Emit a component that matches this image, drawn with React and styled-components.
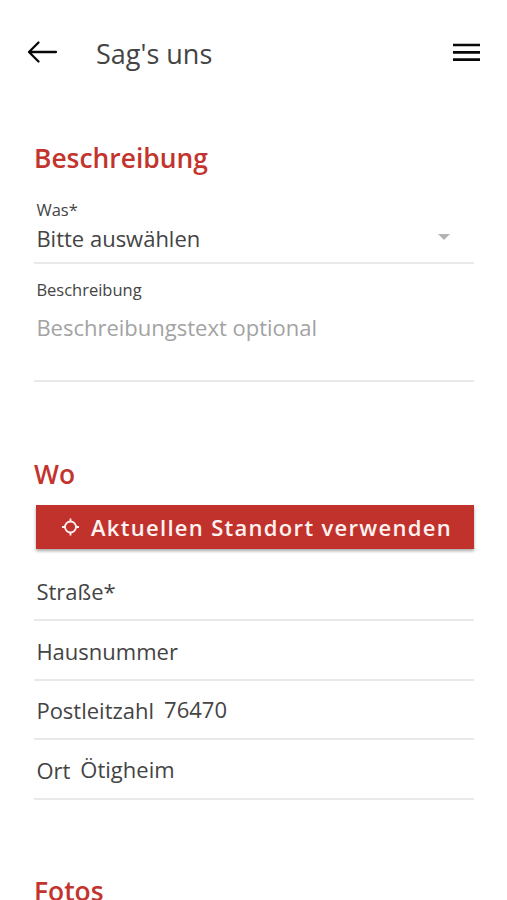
import React from "react";
import styled, { createGlobalStyle } from "styled-components";

const GlobalStyle = createGlobalStyle`
  * { box-sizing: border-box; }
  body { margin: 0; background: #fff; font-family: "Open Sans", sans-serif; color: #444; }
`;
const Screen = styled.main`
  height: 900px; overflow: hidden; background: #fff;
`;
const Toolbar = styled.header`
  display: flex; align-items: center; height: 104px; padding: 0 27px;
`;
const Title = styled.h1`
  flex: 1; margin: 3px 0 0 38px; font-size: 27px; line-height: 36px; font-weight: 400;
`;
const IconButton = styled.button`
  display: flex; padding: 0; border: 0; background: none; color: #080808;
`;
const Section = styled.section`
  padding: 0 33px 0 34px; margin-top: ${(p) => p.$gap}px;
`;
const Heading = styled.h2`
  margin: 0; height: 36px; line-height: 36px; font-size: 26.4px; font-weight: 600; color: #c2342d;
`;
const Field = styled.div`
  height: ${(p) => p.$height}px; padding: ${(p) => p.$top}px 0 0 2.4px; border-bottom: 2px solid #e9e9e9;
`;
const SmallLabel = styled.label`
  display: block; font-size: 16.5px; line-height: 22px;
`;
const Value = styled.div`
  display: flex; align-items: center; justify-content: space-between;
  margin-top: ${(p) => p.$gap}px; padding-right: 24px;
  font-size: 22px; line-height: 30px; color: ${(p) => (p.$muted ? "#a3a3a3" : "#444")};
`;
const DropdownArrow = styled.svg`
  margin-bottom: 2px;
`;
const Rows = styled.div`
  padding-top: 12px;
`;
const Row = styled.div`
  display: flex; gap: 10px; height: 59.7px; padding: 14.6px 0 0 2.4px;
  border-bottom: 2px solid #e9e9e9; font-size: 22px; line-height: 30px;
`;
const RowValue = styled.span`
  margin-top: -1px;
`;
const LocationButton = styled.button`
  display: flex; align-items: center; gap: 12px; width: 438px; height: 44px;
  margin: 13.4px 0 0 2px; padding: 0 0 0 26px; border: 0; background: #c1322c; color: #fff3f2;
  font: 600 22px/30px "Open Sans", sans-serif; letter-spacing: 1.3px; white-space: nowrap;
  box-shadow: 0 2px 3px rgba(0, 0, 0, 0.35);
`;

export default function App() {
  return (
    <Screen>
      <GlobalStyle />
      <Toolbar>
        <IconButton aria-label="Zurück">
          <svg width="31" height="24" viewBox="0 0 31 24" fill="none" stroke="currentColor" strokeWidth="2.3" strokeLinecap="round" strokeLinejoin="round">
            <path d="M29 12H2M11.5 2.5L2 12L11.5 21.5" />
          </svg>
        </IconButton>
        <Title>Sag's uns</Title>
        <IconButton aria-label="Menü">
          <svg width="27" height="20" viewBox="0 0 27 20" stroke="currentColor" strokeWidth="2.6">
            <path d="M0 3H27M0 10.4H27M0 17.6H27" />
          </svg>
        </IconButton>
      </Toolbar>
      <Section $gap={36}>
        <Heading>Beschreibung</Heading>
        <Field $height={88} $top={23}>
          <SmallLabel>Was*</SmallLabel>
          <Value $gap={2}>
            Bitte auswählen
            <DropdownArrow width="12" height="6" viewBox="0 0 12 6" fill="#b3b3b3"><path d="M0 0H12L6 6Z" /></DropdownArrow>
          </Value>
        </Field>
        <Field $height={118} $top={15}>
          <SmallLabel>Beschreibung</SmallLabel>
          <Value $muted $gap={11}>Beschreibungstext optional</Value>
        </Field>
      </Section>
      <Section $gap={74}>
        <Heading>Wo</Heading>
        <LocationButton>
          <svg width="17" height="18" viewBox="0 0 17 18" fill="none" stroke="currentColor" strokeWidth="1.8">
            <circle cx="8.5" cy="9" r="5.5" /><path d="M8.5 0.5V3.5M8.5 14.5V17.5M0 9H3M14 9H17" />
          </svg>
          Aktuellen Standort verwenden
        </LocationButton>
        <Rows>
          <Row>Straße*</Row>
          <Row>Hausnummer</Row>
          <Row>Postleitzahl<RowValue>76470</RowValue></Row>
          <Row>Ort<RowValue>Ötigheim</RowValue></Row>
        </Rows>
      </Section>
      <Section $gap={73}><Heading>Fotos</Heading></Section>
    </Screen>
  );
}
